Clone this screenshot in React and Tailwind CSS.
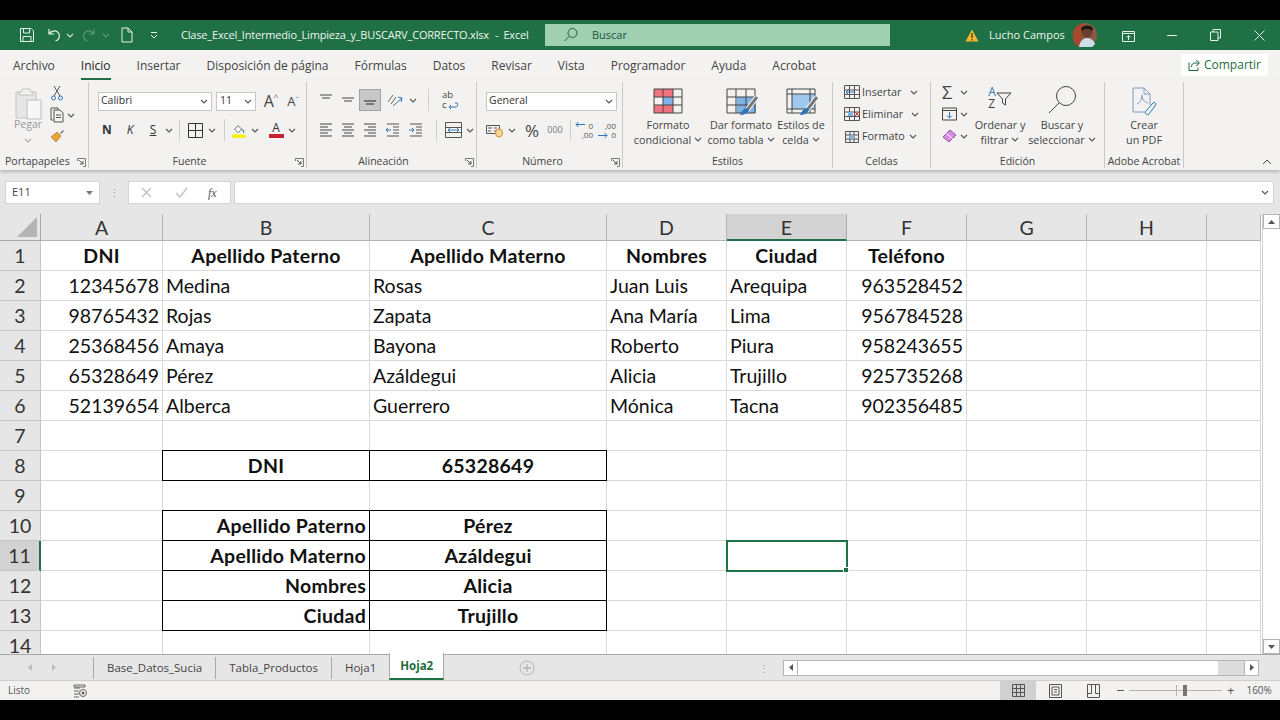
import React from "react";

const ui = { fontFamily: '"Open Sans", "Noto Sans", sans-serif' };
const sheet = { fontFamily: 'Lato, "Liberation Sans", sans-serif' };

const Chev = ({ className = "text-[#555]" }) => (
  <svg width="8" height="5" viewBox="0 0 8 5" className={className}>
    <path d="M1 1l3 3 3-3" fill="none" stroke="currentColor" strokeWidth="1.1" />
  </svg>
);

const Ico = ({ w = 18, h = 18, children, className = "" }) => (
  <svg width={w} height={h} viewBox={`0 0 ${w} ${h}`} fill="none" className={className}>
    {children}
  </svg>
);

const Lines = ({ rows, active }) => (
  <Ico w={16} h={14}>
    {rows.map(([x1, x2, y], i) => (
      <path key={i} d={`M${x1} ${y}H${x2}`} stroke={active ? "#333" : "#555"} strokeWidth="1.1" />
    ))}
  </Ico>
);

const Slot = ({ w, children, className = "" }) => (
  <div style={{ width: w }} className={`flex shrink-0 items-center justify-center ${className}`}>
    {children}
  </div>
);

const VSep = () => <div className="h-[22px] w-px shrink-0 bg-[#cfcfcf]" />;

const Launcher = ({ className = "" }) => (
  <svg width="9" height="9" viewBox="0 0 9 9" fill="none" className={className}>
    <path d="M.5 3V.5H8.500V8.500H6" stroke="#777" />
    <path d="M2 2l4 4M6 3v3H3" stroke="#555" />
  </svg>
);

const Group = ({ w, label, launcher, labelPad = 0, children }) => (
  <div style={{ width: w }} className="flex h-[86px] shrink-0 flex-col border-r border-[#c8c8c8]">
    <div className="h-[73px] shrink-0">{children}</div>
    <div
      style={{ paddingRight: labelPad }}
      className="relative flex h-[13px] items-center justify-center text-[10.5px] text-[#444]"
    >
      {label}
      {launcher && <Launcher className="absolute right-[2px] top-[3px]" />}
    </div>
  </div>
);

const BigBtn = ({ w, icon, l1, l2 }) => (
  <div style={{ width: w }} className="flex shrink-0 flex-col items-center">
    <div className="flex h-[30px] items-end justify-center">{icon}</div>
    <div className="mt-[4px] h-[16px] text-[10.8px] leading-[16px] text-[#444] whitespace-nowrap">{l1}</div>
    <div className="-mt-px flex h-[15px] items-center gap-[3px] text-[10.8px] leading-[15px] text-[#444] whitespace-nowrap">
      {l2}
    </div>
  </div>
);

const GridIcon = ({ fills = [], className = "" }) => (
  <Ico w={30} h={26} className={className}>
    {fills.map(([x, y, w, h, c], i) => (
      <rect key={i} x={x} y={y} width={w} height={h} fill={c} />
    ))}
    <path d="M1 1h28v24H1zM1 9h28M1 17h28M10 1v24M20 1v24" stroke="#444" />
  </Ico>
);

const Brush = () => (
  <g>
    <path d="M31 9L21 22" stroke="#fff" strokeWidth="5" />
    <path d="M31 9L21 22" stroke="#777" strokeWidth="3" />
    <path d="M21 20c-3 0-5 3-7 7 4 0 8-2 9-5z" fill="#2e75b6" />
  </g>
);

function TitleBar() {
  return (
    <div className="flex h-[30px] items-center bg-[#1f7044] text-[11px] text-[#eef5f0]">
      <Slot w={44} className="pl-[10px]">
        <Ico w={16} h={16}>
          <path d="M1.500 1.500h10.500l2.500 2.500v10.500h-13z M4.500 1.500v4.500h6v-4.500 M4 14.500v-5h8v5" stroke="#e8f1ec" />
        </Ico>
      </Slot>
      <Slot w={20}>
        <Ico w={16} h={16}>
          <path d="M3 2v5h5M3 7c2-3 6-4 8.500-2s2.500 6 0 8l-2 1" stroke="#e8f1ec" strokeWidth="1.2" />
        </Ico>
      </Slot>
      <Slot w={12}><Chev className="text-[#cfe2d6]" /></Slot>
      <Slot w={26}>
        <Ico w={16} h={16}>
          <path d="M13 2v5H8M13 7c-2-3-6-4-8.500-2s-2.500 6 0 8l2 1" stroke="#5d9a77" strokeWidth="1.2" />
        </Ico>
      </Slot>
      <Slot w={8}><Chev className="text-[#5d9a77]" /></Slot>
      <Slot w={34}>
        <Ico w={12} h={16}>
          <path d="M1 1h6l4 4v10H1zM7 1v4h4" stroke="#e8f1ec" />
        </Ico>
      </Slot>
      <Slot w={20}>
        <Ico w={8} h={8}>
          <path d="M1 1.500h6M1 4l3 3 3-3" stroke="#e8f1ec" />
        </Ico>
      </Slot>
      <div className="ml-[17px] flex w-[364px] shrink-0 whitespace-nowrap tracking-[-0.18px]">
        <span className="w-[309px]">Clase_Excel_Intermedio_Limpieza_y_BUSCARV_CORRECTO.xlsx</span>
        <span className="ml-[5px]">-</span>
        <span className="ml-[5px]">Excel</span>
      </div>
      <div className="flex h-[22px] w-[345px] shrink-0 items-center bg-[#9fd0b1] text-[#24523a]">
        <Slot w={47} className="pl-[4px]">
          <Ico w={16} h={16}>
            <circle cx="9.500" cy="6" r="4.500" stroke="#2f5b44" />
            <path d="M6 9.500L1.500 14" stroke="#2f5b44" />
          </Ico>
        </Slot>
        Buscar
      </div>
      <div className="flex w-[99px] shrink-0 justify-end pr-[10px]">
        <svg width="14" height="13" viewBox="0 0 14 13">
          <path d="M7 .5L13.500 12.500H.5z" fill="#f2b632" />
          <path d="M7 4v5M7 10v1.500" stroke="#3a2c08" strokeWidth="1.200" />
        </svg>
      </div>
      <div className="w-[84px] shrink-0 whitespace-nowrap">Lucho Campos</div>
      <svg width="24" height="24" viewBox="0 0 24 24" className="shrink-0">
        <circle cx="12" cy="12" r="12" fill="#8a5a44" />
        <path d="M0 12a12 12 0 0 1 10-11.800L9 12l-3 12A12 12 0 0 1 0 12z" fill="#a9472f" />
        <circle cx="14" cy="9" r="5.500" fill="#6b4030" />
        <path d="M8 6c1-4 10-5 12 0l-1 2c-3-3-7-3-10 0z" fill="#1b1613" />
        <path d="M6 24c1-7 5-9 8-9s7 2 8 6a12 12 0 0 1-16 3z" fill="#cfdde8" />
      </svg>
      <Slot w={50} className="pl-[12px]">
        <Ico w={13} h={13}>
          <path d="M.5 2.500h12v10h-12zM.5 4.500h12M6.500 11V6.500M4.500 8.500l2-2 2 2" stroke="#e8f1ec" />
        </Ico>
      </Slot>
      <Slot w={50}><div className="h-px w-[10px] bg-[#e8f1ec]" /></Slot>
      <Slot w={36}>
        <Ico w={11} h={12}>
          <path d="M.5 3h7.500v8.500H.5zM3 3V.5h7.500v8.500H8" stroke="#e8f1ec" />
        </Ico>
      </Slot>
      <Slot w={52}>
        <Ico w={11} h={11}>
          <path d="M.5.5l10 10M10.500.5l-10 10" stroke="#e8f1ec" />
        </Ico>
      </Slot>
    </div>
  );
}

const tabs = ["Archivo", "Inicio", "Insertar", "Disposición de página", "Fórmulas", "Datos", "Revisar", "Vista", "Programador", "Ayuda", "Acrobat"];

function TabBar() {
  return (
    <div className="flex h-[30px] items-center justify-between bg-[#f3f2f1] pl-[13px] pr-[12px]">
      <div className="flex gap-[26px] pt-px text-[12px] text-[#444]">
        {tabs.map((t) => (
          <div key={t} className={`relative whitespace-nowrap ${t === "Inicio" ? "text-[#222]" : ""}`}>
            {t}
            {t === "Inicio" && <div className="absolute -bottom-[5px] left-0 right-0 h-[2px] bg-[#1f7044]" />}
          </div>
        ))}
      </div>
      <div className="flex h-[22px] w-[87px] items-center justify-center gap-[4px] bg-white text-[12px] text-[#1f6b41]">
        <Ico w={12} h={12}>
          <path d="M8 1l3.500 3L8 7M11 4H7C4.500 4 3.500 5.500 3.500 8M1 3.500v8h9V8.500" stroke="#1f6b41" />
        </Ico>
        Compartir
      </div>
    </div>
  );
}

function Clipboard() {
  return (
    <Group w={89} label={<span className="absolute left-[5px] whitespace-nowrap">Portapapeles</span>} launcher>
      <div className="flex h-full pl-[14px] pt-[5px]">
        <div className="flex w-[28px] flex-col items-center">
          <Ico w={28} h={33}>
            <path d="M2 5h20v26H2z" fill="#e6e6e6" stroke="#c4c4c4" />
            <path d="M8 5V2h8v3h3v3H5V5z" fill="#f3f2f1" stroke="#c4c4c4" />
            <path d="M13 13h14v19H13z" fill="#f7f7f7" stroke="#bdbdbd" />
          </Ico>
          <span className="-mt-[3px] text-[10.5px] leading-[15px] text-[#999]">Pegar</span>
          <Chev className="mt-[6px] text-[#aaa]" />
        </div>
        <div className="ml-[8px] flex flex-col items-start">
          <Ico w={14} h={16} className="-mt-[2px]">
            <path d="M4 1l6 10M10 1L4 11" stroke="#555" />
            <circle cx="3.500" cy="13" r="2" stroke="#2e75b6" />
            <circle cx="10.500" cy="13" r="2" stroke="#2e75b6" />
          </Ico>
          <div className="mt-[6px] flex items-center gap-[3px]">
            <Ico w={14} h={16}>
              <path d="M3.500 13H1V1h7v2M4 3h6l3 3v9H4z" stroke="#555" />
              <path d="M6 8h5M6 10.500h5" stroke="#555" />
            </Ico>
            <Chev />
          </div>
          <Ico w={16} h={15} className="mt-[5px]">
            <path d="M10 5l3-3 1 1-3 3z" fill="#777" />
            <path d="M1 9l6-5 4 4-5 6z" fill="#e8a33a" stroke="#b4761a" strokeWidth=".7" />
          </Ico>
        </div>
      </div>
    </Group>
  );
}

function Font() {
  return (
    <Group w={218} label="Fuente" launcher labelPad={16}>
      <div className="box-content flex h-[22px] items-center pl-[9px] pt-[8px]">
        <div className="flex h-[19px] w-[114px] items-center justify-between border border-[#c6c6c6] bg-white pl-[2px] pr-[3px] text-[10.5px] text-[#333]">
          Calibri <Chev />
        </div>
        <div className="ml-[4px] flex h-[19px] w-[40px] items-center justify-between border border-[#c6c6c6] bg-white pl-[3px] pr-[3px] text-[10.5px] text-[#333]">
          11 <Chev />
        </div>
        <div className="ml-[4px] flex w-[22px] items-start justify-center text-[16px] leading-none text-[#444]">
          A<span className="text-[8px] text-[#666]">^</span>
        </div>
        <div className="ml-[1px] flex w-[20px] items-start justify-center text-[13px] leading-none text-[#444]">
          A<span className="text-[8px] text-[#2e75b6]">ˇ</span>
        </div>
      </div>
      <div className="mt-[8px] flex h-[20px] items-center pl-[9px] text-[#333]">
        <Slot w={18} className="text-[12px] font-bold">N</Slot>
        <Slot w={28} className="text-[12px] italic">K</Slot>
        <Slot w={18} className="text-[12px] underline">S</Slot>
        <Slot w={14}><Chev /></Slot>
        <Slot w={6}><VSep /></Slot>
        <Slot w={26}>
          <Ico w={15} h={15}><path d="M.5.5h14v14H.5zM7.500.5v14M.5 7.500h14" stroke="#333" /></Ico>
        </Slot>
        <Slot w={8}><Chev /></Slot>
        <Slot w={16}><VSep /></Slot>
        <Slot w={14}>
          <Ico w={16} h={17}>
            <path d="M3 7l4-4 4 4-4 4z" stroke="#555" fill="#fff" />
            <path d="M11 7c2 1 3 2 2 4" stroke="#2e75b6" strokeWidth="1.300" />
            <rect x="0" y="13" width="16" height="4" fill="#f7f012" />
          </Ico>
        </Slot>
        <Slot w={18}><Chev /></Slot>
        <Slot w={24}>
          <div className="flex flex-col items-center text-[12px] leading-[12px] text-[#333]">
            A<div className="h-[4px] w-[15px] bg-[#c8202c]" />
          </div>
        </Slot>
        <Slot w={8}><Chev /></Slot>
      </div>
    </Group>
  );
}

const L = {
  top: [[2, 14, 2], [4, 12, 5]],
  mid: [[2, 14, 5], [4, 12, 8]],
  bot: [[2, 14, 8], [4, 12, 11]],
  left: [[2, 14, 1], [2, 10, 4], [2, 14, 7], [2, 10, 10], [2, 14, 13]],
  center: [[2, 14, 1], [4, 12, 4], [2, 14, 7], [4, 12, 10], [2, 14, 13]],
  right: [[2, 14, 1], [6, 14, 4], [2, 14, 7], [6, 14, 10], [2, 14, 13]],
};

function Align() {
  return (
    <Group w={170} label="Alineación" launcher labelPad={16}>
      <div className="box-content flex h-[22px] items-center pl-[7px] pt-[7px]">
        <Slot w={23}><Lines rows={L.top} /></Slot>
        <Slot w={22}><Lines rows={L.mid} /></Slot>
        <Slot w={22} className="h-[22px] border border-[#a3a3a3] bg-[#c8c8c8]"><Lines rows={L.bot} active /></Slot>
        <Slot w={28}>
          <Ico w={17} h={15}>
            <path d="M1 9l5-7M4 11l5-7" stroke="#666" />
            <path d="M6 13l9-8M11 4l4 1-1 4" stroke="#2e75b6" />
          </Ico>
        </Slot>
        <Slot w={8}><Chev /></Slot>
        <Slot w={22}><VSep /></Slot>
        <Slot w={22}>
          <div className="relative w-[16px] text-[9.5px] text-[#444]">
            <div className="h-[10px] leading-[9px]">ab</div>
            <div className="h-[10px] leading-[9px]">c</div>
            <svg width="12" height="8" viewBox="0 0 12 8" className="absolute bottom-0 left-[5px]" fill="none">
              <path d="M8 1h2c1 0 1 4-1 4H2M4 3L2 5l2 2" stroke="#2e75b6" />
            </svg>
          </div>
        </Slot>
      </div>
      <div className="mt-[9px] flex h-[20px] items-center pl-[7px]">
        <Slot w={23}><Lines rows={L.left} /></Slot>
        <Slot w={22}><Lines rows={L.center} /></Slot>
        <Slot w={22}><Lines rows={L.right} /></Slot>
        <Slot w={23}>
          <Ico w={16} h={14}>
            <path d="M2 1h12M8 4h6M8 7h6M8 10h6M2 13h12" stroke="#555" />
            <path d="M6 7H1M3 5L1 7l2 2" stroke="#2e75b6" />
          </Ico>
        </Slot>
        <Slot w={23}>
          <Ico w={16} h={14}>
            <path d="M2 1h12M8 4h6M8 7h6M8 10h6M2 13h12" stroke="#555" />
            <path d="M1 7h5M4 5l2 2-2 2" stroke="#2e75b6" />
          </Ico>
        </Slot>
        <Slot w={18}><VSep /></Slot>
        <Slot w={17}>
          <Ico w={17} h={16}>
            <path d="M.5.5h16v15H.5zM.5 5.500h16M.5 10.500h16" stroke="#555" />
            <rect x="1" y="6" width="15" height="4" fill="#fff" />
            <path d="M3 8h11M5 6L3 8l2 2M12 6l2 2-2 2" stroke="#2e75b6" />
          </Ico>
        </Slot>
        <Slot w={15}><Chev /></Slot>
      </div>
    </Group>
  );
}

function NumberGroup() {
  return (
    <Group w={146} label="Número" launcher labelPad={14}>
      <div className="box-content flex h-[22px] items-center pl-[9px] pt-[8px]">
        <div className="flex h-[19px] w-[131px] items-center justify-between border border-[#c6c6c6] bg-white pl-[2px] pr-[3px] text-[10.5px] text-[#333]">
          General <Chev />
        </div>
      </div>
      <div className="mt-[8px] flex h-[20px] items-center pl-[9px] text-[#444]">
        <Slot w={18}>
          <Ico w={18} h={15}>
            <path d="M.5 2.500h13v8H.5z" stroke="#555" />
            <path d="M2 5h4M2 8h3M8 5h3M8 8h2" stroke="#555" />
            <ellipse cx="13" cy="10" rx="3.500" ry="4" fill="#f7d69b" stroke="#d68b1d" />
          </Ico>
        </Slot>
        <Slot w={16}><Chev /></Slot>
        <Slot w={24} className="text-[17px] leading-none">%</Slot>
        <Slot w={22} className="text-[9px] text-[#777]">000</Slot>
        <Slot w={8}><VSep /></Slot>
        <Slot w={20}>
          <div className="relative h-[18px] w-[18px] text-right text-[8px] leading-[9px] text-[#555]">
            0<br />,00
            <svg width="10" height="7" viewBox="0 0 10 7" className="absolute left-0 top-0" fill="none">
              <path d="M10 3.500H1M3.500 1L1 3.500 3.500 6" stroke="#2e75b6" />
            </svg>
          </div>
        </Slot>
        <Slot w={26}>
          <div className="relative h-[18px] w-[18px] text-right text-[8px] leading-[9px] text-[#555]">
            ,00<br />0
            <svg width="10" height="7" viewBox="0 0 10 7" className="absolute bottom-0 left-0" fill="none">
              <path d="M0 3.500h9M6.500 1L9 3.500 6.500 6" stroke="#2e75b6" />
            </svg>
          </div>
        </Slot>
      </div>
    </Group>
  );
}

function Styles() {
  return (
    <Group w={210} label="Estilos">
      <div className="flex h-full items-start pl-[7px] pt-[1px]">
        <BigBtn
          w={76}
          icon={
            <GridIcon
              className="translate-y-px"
              fills={[[1, 1, 19, 8, "#f2727f"], [10, 9, 10, 8, "#7fb2e5"], [1, 17, 19, 8, "#f2727f"]]}
            />
          }
          l1="Formato"
          l2={<>condicional <Chev /></>}
        />
        <BigBtn
          w={70}
          icon={
            <Ico w={34} h={30} className="translate-x-[2px] translate-y-[5px]">
              <rect x="11" y="9" width="19" height="16" fill="#7fb2e5" />
              <path d="M1 1h28v24H1zM1 9h28M1 17h28M10 1v24M20 1v24" stroke="#444" />
              <Brush />
            </Ico>
          }
          l1="Dar formato"
          l2={<>como tabla <Chev /></>}
        />
        <BigBtn
          w={50}
          icon={
            <Ico w={34} h={30} className="translate-x-[2px] translate-y-[5px]">
              <rect x="6" y="6" width="23" height="15" fill="#9fc8ef" />
              <path d="M1 1h28v24H1zM1 6h28M1 21h28M6 1v24M24 1v24" stroke="#444" />
              <Brush />
            </Ico>
          }
          l1="Estilos de"
          l2={<>celda <Chev /></>}
        />
      </div>
    </Group>
  );
}

const CellBtn = ({ icon, label, pr }) => (
  <div className="flex h-[22px] items-center">
    <div className="w-[18px]">{icon}</div>
    <span className="text-[10.8px] text-[#444]">{label}</span>
    <span style={{ marginLeft: pr }}><Chev /></span>
  </div>
);

function Cells() {
  const base = "M.5.5h15v13H.5zM.5 5h15M.5 9.500h15M5.500.5v13M10.500.5v13";
  return (
    <Group w={98} label="Celdas">
      <div className="-mt-px flex flex-col pl-[11px]">
        <CellBtn
          pr={8}
          label="Insertar"
          icon={<Ico w={16} h={14}><path d={base} stroke="#555" /><path d="M10 7H2M5 4L2 7l3 3" stroke="#2e75b6" /></Ico>}
        />
        <CellBtn
          pr={8}
          label="Eliminar"
          icon={<Ico w={16} h={14}><path d={base} stroke="#555" /><path d="M4 5h5v4H4z" fill="#7fb2e5" /><path d="M11 5l4 4M15 5l-4 4" stroke="#d13438" /></Ico>}
        />
        <CellBtn
          pr={4}
          label="Formato"
          icon={<Ico w={16} h={14}><path d="M1.500 2.500h13v11h-13zM1.500 6h13M1.500 10h13M6 2.500v11M10 2.500v11" stroke="#555" /><rect x="6" y="6" width="4" height="4" fill="#7fb2e5" /></Ico>}
        />
      </div>
    </Group>
  );
}

function Editing() {
  return (
    <Group w={174} label="Edición">
      <div className="flex h-full items-start pl-[9px]">
        <div className="-mt-px flex w-[33px] flex-col">
          <div className="flex h-[22px] items-center gap-[3px] pl-[2px]">
            <span className="w-[15px] text-[18px] leading-none text-[#444]">Σ</span><Chev />
          </div>
          <div className="flex h-[22px] items-center gap-[3px] pl-[2px]">
            <Ico w={15} h={14}><path d="M.5 1h14v12H.5zM.5 3.500h14" stroke="#444" /><path d="M7.500 5v6M5 8.500l2.500 2.500L10 8.500" stroke="#2e75b6" /></Ico>
            <Chev />
          </div>
          <div className="flex h-[22px] items-center gap-[3px] pl-[2px]">
            <Ico w={15} h={14}><path d="M1 8l7-7 6 5-7 7z" fill="#d88ce0" stroke="#a24bb0" /><path d="M4.500 4.500l6 5" stroke="#fff" /></Ico>
            <Chev />
          </div>
        </div>
        <div className="flex w-[54px] flex-col items-center pt-[1px]">
          <div className="flex h-[30px] items-center text-[#444]">
            <div className="text-[12px]">
              <div className="h-[12px] leading-[11px] text-[#2e75b6]">A</div>
              <div className="h-[12px] leading-[11px]">Z</div>
            </div>
            <Ico w={16} h={17}><path d="M1 3h14L9.500 9v6l-3-2V9z" stroke="#444" /></Ico>
          </div>
          <div className="mt-[4px] h-[16px] text-[10.8px] leading-[16px] text-[#444] whitespace-nowrap">Ordenar y</div>
          <div className="-mt-px flex h-[15px] items-center gap-[3px] text-[10.8px] leading-[15px] text-[#444]">filtrar <Chev /></div>
        </div>
        <div className="flex w-[70px] flex-col items-center pt-[1px]">
          <div className="flex h-[30px] items-center">
            <Ico w={30} h={30} className="translate-y-[2px]"><circle cx="19" cy="11" r="9.500" stroke="#444" /><path d="M12 18L2 28" stroke="#444" /></Ico>
          </div>
          <div className="mt-[4px] h-[16px] text-[10.8px] leading-[16px] text-[#444] whitespace-nowrap">Buscar y</div>
          <div className="-mt-px flex h-[15px] items-center gap-[3px] text-[10.8px] leading-[15px] text-[#444] whitespace-nowrap">seleccionar <Chev /></div>
        </div>
      </div>
    </Group>
  );
}

function Acrobat() {
  return (
    <Group w={79} label={<span className="whitespace-nowrap">Adobe Acrobat</span>}>
      <div className="pt-[1px]">
        <BigBtn
          w={78}
          icon={
            <Ico w={26} h={30} className="translate-y-[3px]">
              <path d="M2 2h11l6 6v11M2 2v24h12" stroke="#7f9ec4" />
              <path d="M13 2v6h6" stroke="#7f9ec4" />
              <path d="M6 18c3-1 5-5 5-9 0 4 2 7 6 8" stroke="#7f9ec4" />
              <path d="M15 25l7-8c2-2 4 1 2 3l-6 8c-2 2-5-1-3-3z" stroke="#2e75b6" />
            </Ico>
          }
          l1="Crear"
          l2="un PDF"
        />
      </div>
    </Group>
  );
}

function Ribbon() {
  return (
    <div className="relative z-10 flex h-[90px] bg-[#f3f2f1] pt-[2px] shadow-[0_2px_3px_rgba(0,0,0,0.2)]">
      <Clipboard />
      <Font />
      <Align />
      <NumberGroup />
      <Styles />
      <Cells />
      <Editing />
      <Acrobat />
      <svg width="10" height="6" viewBox="0 0 10 6" className="absolute bottom-[5px] right-[8px]" fill="none">
        <path d="M1 5l4-4 4 4" stroke="#444" />
      </svg>
    </div>
  );
}

function FormulaBar() {
  return (
    <div className="flex h-[44px] items-center bg-[#e6e6e6] pl-[5px] pr-[6px] pt-[1px]">
      <div className="flex h-[23px] w-[95px] items-center justify-between border border-[#d4d4d4] bg-white pl-[6px] pr-[5px] text-[11px] text-[#444]">
        E11
        <svg width="7" height="4" viewBox="0 0 7 4" className="mr-[1px]"><path d="M0 0h7L3.500 4z" fill="#777" /></svg>
      </div>
      <div className="w-[28px] text-center text-[11px] leading-[8px] text-[#999]">⋮</div>
      <div className="flex h-[23px] w-[103px] items-center border border-[#d4d4d4] bg-white pl-[8px] text-[#bbb]">
        <Slot w={18}>
          <Ico w={11} h={11}><path d="M1 1l9 9M10 1l-9 9" stroke="#c0c0c0" strokeWidth="1.300" /></Ico>
        </Slot>
        <Slot w={18} className="ml-[17px]">
          <Ico w={13} h={11}><path d="M1 6l4 4 7-9" stroke="#c0c0c0" strokeWidth="1.300" /></Ico>
        </Slot>
        <span className="ml-[18px] text-[12px] italic text-[#555]" style={{ fontFamily: '"Liberation Serif", serif' }}>fx</span>
      </div>
      <div className="ml-[3px] flex h-[23px] flex-1 items-center justify-end border border-[#d4d4d4] bg-white pr-[4px]">
        <Chev />
      </div>
    </div>
  );
}

const columns = [
  { id: "A", label: "A" },
  { id: "B", label: "B" },
  { id: "C", label: "C" },
  { id: "D", label: "D" },
  { id: "E", label: "E" },
  { id: "F", label: "F" },
  { id: "G", label: "G" },
  { id: "H", label: "H" },
  { id: "I", label: "" },
];

// { text, cls } por celda; box = borde negro de la tabla
const L_ = (t) => ({ t, c: "justify-start pl-[3px]" });
const R_ = (t) => ({ t, c: "justify-end pr-[3px]" });
const C_ = (t) => ({ t, c: "justify-center font-bold tracking-[0.25px]" });
const RB = (t) => ({ t, c: "justify-end pr-[3px] font-bold tracking-[0.25px]", box: true });
const CB = (t) => ({ t, c: "justify-center font-bold tracking-[0.25px]", box: true });

const rows = [
  { A: C_("DNI"), B: C_("Apellido Paterno"), C: C_("Apellido Materno"), D: C_("Nombres"), E: C_("Ciudad"), F: C_("Teléfono") },
  { A: R_("12345678"), B: L_("Medina"), C: L_("Rosas"), D: L_("Juan Luis"), E: L_("Arequipa"), F: R_("963528452") },
  { A: R_("98765432"), B: L_("Rojas"), C: L_("Zapata"), D: L_("Ana María"), E: L_("Lima"), F: R_("956784528") },
  { A: R_("25368456"), B: L_("Amaya"), C: L_("Bayona"), D: L_("Roberto"), E: L_("Piura"), F: R_("958243655") },
  { A: R_("65328649"), B: L_("Pérez"), C: L_("Azáldegui"), D: L_("Alicia"), E: L_("Trujillo"), F: R_("925735268") },
  { A: R_("52139654"), B: L_("Alberca"), C: L_("Guerrero"), D: L_("Mónica"), E: L_("Tacna"), F: R_("902356485") },
  {},
  { B: CB("DNI"), C: CB("65328649") },
  {},
  { B: RB("Apellido Paterno"), C: CB("Pérez") },
  { B: RB("Apellido Materno"), C: CB("Azáldegui") },
  { B: RB("Nombres"), C: CB("Alicia") },
  { B: RB("Ciudad"), C: CB("Trujillo") },
  {},
];

function Sheet() {
  return (
    <div className="flex h-[441px] overflow-hidden border-b border-[#a8a8a8] bg-white">
      <div className="w-[1262px] shrink-0 overflow-hidden" style={sheet}>
        <div className="grid auto-rows-[30px] grid-cols-[41px_122px_207px_237px_120px_120px_120px_120px_120px_54px] text-[19.5px] text-[#111] [grid-template-rows:27px]">
          <div className="flex items-end justify-end border-r border-b border-[#a8a8a8] bg-[#e6e6e6] pb-[3px] pr-[3px]">
            <svg width="20" height="20" viewBox="0 0 20 20"><path d="M20 0v20H0z" fill="#b4b4b4" /></svg>
          </div>
          {columns.map((c) => (
            <div
              key={c.id}
              className={`flex items-center justify-center border-r pt-[2px] text-[#333] ${
                c.id === "E"
                  ? "border-b-2 border-r-[#a8a8a8] border-b-[#1f7044] bg-[#d2d2d2]"
                  : "border-b border-[#b4b4b4] bg-[#e6e6e6]"
              }`}
            >
              {c.label}
            </div>
          ))}
          {rows.map((r, i) => (
            <React.Fragment key={i}>
              <div
                className={`flex items-center justify-center border-r pt-[1px] text-[#333] ${
                  i === 10
                    ? "border-b border-r-2 border-[#c6c6c6] border-r-[#1f7044] bg-[#d2d2d2]"
                    : "border-b border-[#c6c6c6] bg-[#e6e6e6]"
                }`}
              >
                {i + 1}
              </div>
              {columns.map((c) => {
                const cell = r[c.id];
                const active = i === 10 && c.id === "E";
                return (
                  <div
                    key={c.id}
                    className={`relative flex items-center whitespace-nowrap ${
                      cell?.box
                        ? "z-10 -ml-px -mt-px border border-black"
                        : "border-r border-b border-[#d8d8d8]"
                    } ${cell?.c ?? ""}`}
                  >
                    {cell?.t}
                    {active && (
                      <div className="absolute -left-px -top-px z-20 h-[32px] w-[122px] border-2 border-[#1f7044]">
                        <div className="absolute -bottom-[3px] -right-[3px] h-[6px] w-[6px] border border-white bg-[#1f7044]" />
                      </div>
                    )}
                  </div>
                );
              })}
            </React.Fragment>
          ))}
        </div>
      </div>
      <div className="flex w-[18px] shrink-0 flex-col justify-between border-l border-[#d0d0d0] bg-[#e9e9e9]">
        <div className="flex flex-1 flex-col bg-white">
          <div className="flex h-[15px] items-center justify-center border border-[#b4b4b4] bg-white">
            <svg width="7" height="4" viewBox="0 0 7 4"><path d="M0 4h7L3.500 0z" fill="#555" /></svg>
          </div>
        </div>
        <div className="flex h-[15px] items-center justify-center border border-[#b4b4b4] bg-white">
          <svg width="7" height="4" viewBox="0 0 7 4"><path d="M0 0h7L3.500 4z" fill="#555" /></svg>
        </div>
      </div>
    </div>
  );
}

const sheetTabs = ["Base_Datos_Sucia", "Tabla_Productos", "Hoja1"];

function SheetTabs() {
  return (
    <div className="flex h-[26px] items-center border-b border-[#cfcfcf] bg-[#e6e6e6] text-[11.5px] text-[#444]">
      <div className="flex w-[93px] shrink-0 items-center justify-center gap-[20px] pr-[10px] text-[#aaa]">
        <svg width="4" height="7" viewBox="0 0 4 7"><path d="M4 0v7L0 3.500z" fill="#bbb" /></svg>
        <svg width="4" height="7" viewBox="0 0 4 7"><path d="M0 0v7l4-3.500z" fill="#bbb" /></svg>
      </div>
      {sheetTabs.map((t) => (
        <div key={t} className="flex h-[22px] items-center border-l border-[#a8a8a8] px-[13px] whitespace-nowrap">
          {t}
        </div>
      ))}
      <div className="-mt-[2px] flex h-[27px] items-center border-x border-b-2 border-x-[#a8a8a8] border-b-[#1f7044] bg-white px-[10px] font-bold text-[#1f6b41]">
        Hoja2
      </div>
      <svg width="16" height="16" viewBox="0 0 16 16" fill="none" className="ml-[75px]">
        <circle cx="8" cy="8" r="7" stroke="#b4b4b4" />
        <path d="M8 4v8M4 8h8" stroke="#b4b4b4" strokeWidth="1.300" />
      </svg>
      <div className="ml-[224px] mr-[14px] text-[10px] leading-[6px] text-[#999]">⋮</div>
      <div className="flex h-[16px] w-[476px] items-stretch border border-[#b4b4b4] bg-[#dcdcdc]">
        <div className="flex w-[14px] items-center justify-center border-r border-[#b4b4b4] bg-white">
          <svg width="4" height="7" viewBox="0 0 4 7"><path d="M4 0v7L0 3.500z" fill="#555" /></svg>
        </div>
        <div className="w-[420px] bg-white" />
        <div className="ml-auto flex w-[14px] items-center justify-center border-l border-[#b4b4b4] bg-white">
          <svg width="4" height="7" viewBox="0 0 4 7"><path d="M0 0v7l4-3.500z" fill="#555" /></svg>
        </div>
      </div>
    </div>
  );
}

function StatusBar() {
  return (
    <div className="flex h-[19px] items-center bg-[#f3f2f1] pl-[8px] text-[10px] text-[#555]">
      <span className="w-[65px]">Listo</span>
      <Ico w={14} h={14}>
        <path d="M1 1h11v2H1zM1 4h6M1 7h5M1 10h5M1 13h5" stroke="#666" />
        <circle cx="10" cy="9" r="3.500" stroke="#666" />
        <circle cx="10" cy="9" r="1.500" fill="#666" />
      </Ico>
      <Slot w={36} className="ml-[913px] h-[19px] bg-[#d0d0d0]">
        <Ico w={13} h={13}><path d="M.5.5h12v12H.5zM.5 4.500h12M.5 8.500h12M4.500.5v12M8.500.5v12" stroke="#555" /></Ico>
      </Slot>
      <Slot w={39}>
        <Ico w={13} h={14}><path d="M.5.5h12v13H.5zM3 3h7v8H3zM5 5.500h3M5 8h3" stroke="#555" /></Ico>
      </Slot>
      <Slot w={37}>
        <Ico w={13} h={14}><path d="M.5.5h12v13H.5zM.5 9.500h4v-9M8.500.5v9h4" stroke="#555" /></Ico>
      </Slot>
      <div className="ml-[5px] h-px w-[7px] bg-[#555]" />
      <div className="relative ml-[5px] h-px w-[93px] bg-[#b4b4b4]">
        <div className="absolute left-[47px] top-[-5px] h-[11px] w-px bg-[#b4b4b4]" />
        <div className="absolute left-[54px] top-[-5px] h-[11px] w-[4px] bg-[#777]" />
      </div>
      <span className="ml-[5px] text-[13px] leading-none text-[#555]">+</span>
      <span className="ml-[12px] text-[10px]">160%</span>
    </div>
  );
}

export default function App() {
  return (
    <div className="flex h-[720px] w-[1280px] flex-col overflow-hidden bg-black" style={ui}>
      <div className="h-5 shrink-0" />
      <TitleBar />
      <TabBar />
      <Ribbon />
      <FormulaBar />
      <Sheet />
      <SheetTabs />
      <StatusBar />
      <div className="flex-1" />
    </div>
  );
}
